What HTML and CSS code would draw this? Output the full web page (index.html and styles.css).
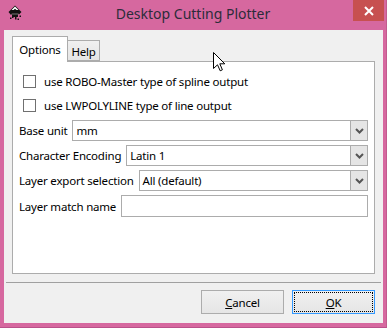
FILE: index.html
```html
<!DOCTYPE html>
<html>
<head>
<meta charset="utf-8">
<link rel="stylesheet" href="styles.css">
</head>
<body>
<div class="window">
  <div class="titlebar">
    <div class="tb-left">
      <svg class="app-icon" width="16" height="16" viewBox="0 0 16 16">
        <path d="M8 0.5 L14.5 7 L12 9.5 L11 8.5 L11 12 L9.5 12 L9.5 14.5 L8 14.5 L8 12 L6.5 12 L6.5 13 L5 13 L5 9 L4 10 L1.5 7 Z" fill="#111"/>
        <path d="M8 1.5 L11.5 5 L9.5 5 L8 3.8 L6.5 5 L4.5 5 Z" fill="#fff"/>
        <path d="M4 9.5 L12 9.5 L11 8.5 L5 8.5 Z" fill="#777"/>
        <rect x="12.5" y="10.5" width="1.5" height="1.5" fill="#111"/>
        <rect x="3" y="12.5" width="1.5" height="1.5" fill="#111"/>
        <rect x="10.5" y="13.5" width="1.5" height="1.5" fill="#111"/>
      </svg>
    </div>
    <div class="title">Desktop Cutting Plotter</div>
    <div class="tb-right">
      <div class="close-btn">
        <svg width="10" height="10" viewBox="0 0 10 10"><path d="M1 1 L9 9 M9 1 L1 9" stroke="#fff" stroke-width="2"/></svg>
      </div>
    </div>
  </div>
  <div class="client">
    <div class="tabbar">
      <div class="tab tab-active">Options</div>
      <div class="tab tab-inactive">Help</div>
    </div>
    <div class="pane">
      <div class="check-row"><span class="checkbox"></span><span>use ROBO-Master type of spline output</span></div>
      <div class="check-row"><span class="checkbox"></span><span>use LWPOLYLINE type of line output</span></div>
      <div class="field-row first-field">
        <span class="lbl">Base unit</span>
        <div class="combo"><span class="val">mm</span><span class="drop"><svg width="9" height="6" viewBox="0 0 9 6"><path d="M1 1 L4.5 4.5 L8 1" stroke="#555" stroke-width="2" fill="none"/></svg></span></div>
      </div>
      <div class="field-row">
        <span class="lbl">Character Encoding</span>
        <div class="combo"><span class="val">Latin 1</span><span class="drop"><svg width="9" height="6" viewBox="0 0 9 6"><path d="M1 1 L4.5 4.5 L8 1" stroke="#555" stroke-width="2" fill="none"/></svg></span></div>
      </div>
      <div class="field-row">
        <span class="lbl">Layer export selection</span>
        <div class="combo"><span class="val">All (default)</span><span class="drop"><svg width="9" height="6" viewBox="0 0 9 6"><path d="M1 1 L4.5 4.5 L8 1" stroke="#555" stroke-width="2" fill="none"/></svg></span></div>
      </div>
      <div class="field-row">
        <span class="lbl">Layer match name</span>
        <div class="textfield"></div>
      </div>
    </div>
    <div class="sep"></div>
    <div class="buttons">
      <div class="btn"><span><u>C</u>ancel</span></div>
      <div class="btn btn-default"><span><u>O</u>K</span></div>
    </div>
  </div>
  <svg class="cursor" width="13" height="20" viewBox="0 0 13 20">
    <path d="M0.5 0.5 L0.5 16.5 L4.5 12.8 L7.2 18.8 L9.4 17.8 L6.8 11.8 L11.8 11.8 Z" fill="#fff" stroke="#000" stroke-width="1" stroke-linejoin="miter"/>
  </svg>
</div>
</body>
</html>
```

FILE: styles.css
```css
* { box-sizing: border-box; }
html, body { margin: 0; padding: 0; }
body {
  width: 387px;
  height: 328px;
  overflow: hidden;
  background: #d6689f;
  font-family: "Noto Sans", "Open Sans", sans-serif;
  font-size: 11.5px;
  letter-spacing: -0.2px;
  color: #000;
}
.window {
  position: relative;
  width: 387px;
  height: 328px;
  background: #d6689f;
  border-right: 1px solid #c25b8e;
  border-bottom: 1px solid #b9518a;
  display: flex;
  flex-direction: column;
}
.titlebar {
  height: 30px;
  display: grid;
  grid-template-columns: 1fr auto 1fr;
  align-items: start;
}
.tb-left { padding: 5px 0 0 7px; }
.app-icon { display: block; }
.title {
  font-size: 14px;
  letter-spacing: 0;
  line-height: 28px;
  color: #2c2c3a;
  white-space: nowrap;
}
.tb-right { display: flex; justify-content: flex-end; padding-right: 2px; }
.close-btn {
  width: 31px;
  height: 21px;
  background: #c75050;
  display: flex;
  align-items: center;
  justify-content: center;
}
.close-btn svg { display: block; }
.client {
  margin: 0 3px 4px 4px;
  flex: 1;
  background: #f0f0f0;
  padding: 7px 8px 0 8px;
  display: flex;
  flex-direction: column;
}
.tabbar {
  height: 25px;
  display: flex;
  align-items: flex-end;
  position: relative;
  z-index: 1;
  margin-bottom: -1px;
}
.tab {
  border: 1px solid #acacac;
  border-bottom: none;
  display: flex;
  align-items: center;
  justify-content: center;
}
.tab-active {
  width: 56px;
  height: 26px;
  background: #fff;
  padding-bottom: 1px;
}
.tab-inactive {
  width: 32px;
  height: 21px;
  border-left: none;
  border-bottom: 1px solid #acacac;
  background: linear-gradient(#f0f0f0, #e5e5e5);
  margin-bottom: 1px;
  padding-top: 1px;
}
.pane {
  width: 363px;
  height: 213px;
  border: 1px solid #acacac;
  background: #fff;
  padding: 7px 6px 0 6px;
  display: flex;
  flex-direction: column;
}
.check-row {
  height: 24px;
  display: flex;
  align-items: center;
  padding-left: 4px;
  gap: 8px;
}
.checkbox {
  width: 13px;
  height: 13px;
  border: 1px solid #707070;
  background: #fff;
  flex: none;
}
.field-row {
  display: flex;
  align-items: center;
  gap: 5px;
  margin-top: 4px;
}
.first-field { margin-top: 3px; }
.lbl { white-space: nowrap; }
.combo {
  flex: 1;
  height: 21px;
  border: 1px solid #acacac;
  background: #fff;
  display: flex;
  align-items: center;
}
.val { flex: 1; padding-left: 3px; }
.drop {
  width: 17px;
  height: 19px;
  border-left: 1px solid #acacac;
  background: #e5e5e5;
  display: flex;
  align-items: center;
  justify-content: center;
}
.drop svg { display: block; }
.textfield {
  flex: 1;
  height: 22px;
  border: 1px solid #acacac;
  background: #fff;
}
.sep {
  height: 1px;
  background: #a0a0a0;
  margin: 8px -6px 0 -6px;
}
.buttons {
  display: flex;
  justify-content: flex-end;
  gap: 8px;
  margin-top: 7px;
}
.btn {
  position: relative;
  width: 83px;
  height: 24px;
  border: 1px solid #acacac;
  background: linear-gradient(#f0f0f0, #e5e5e5);
  display: flex;
  align-items: center;
  justify-content: center;
}
.btn-default { border-color: #3399ff; }
.btn-default::after {
  content: "";
  position: absolute;
  inset: 1px;
  border: 1px dotted #000;
}
.cursor {
  position: absolute;
  left: 213px;
  top: 52px;
}
```
